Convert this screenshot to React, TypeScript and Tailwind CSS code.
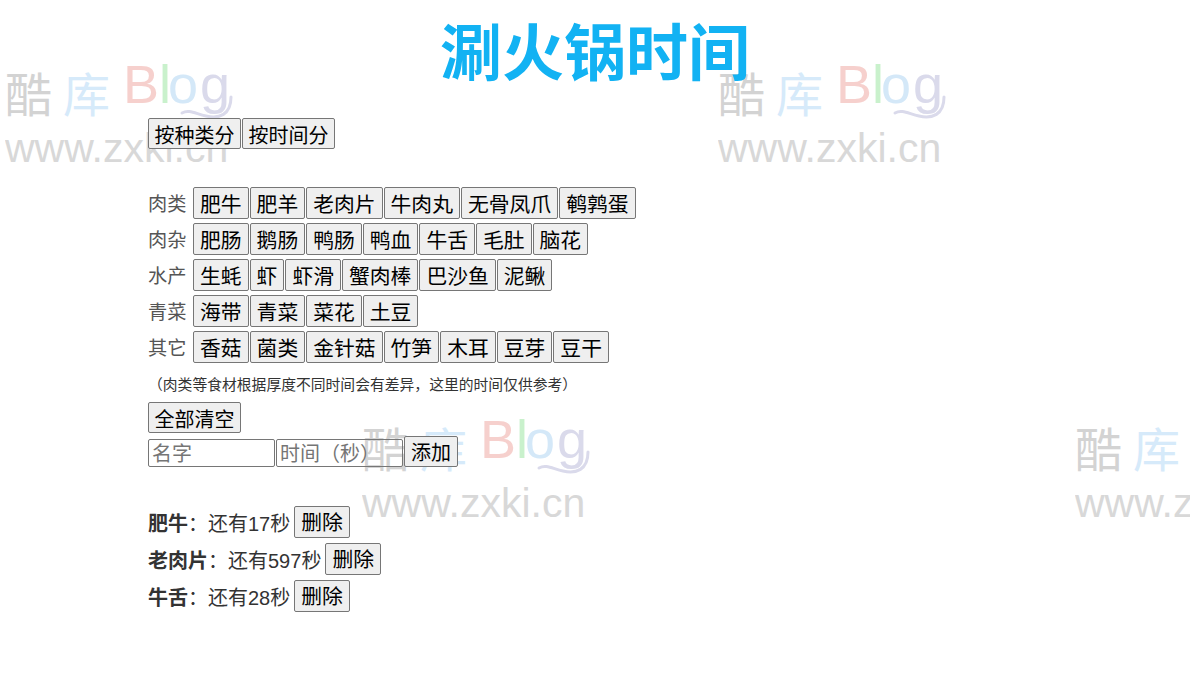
const categories = [
  { label: "肉类", items: ["肥牛", "肥羊", "老肉片", "牛肉丸", "无骨凤爪", "鹌鹑蛋"] },
  { label: "肉杂", items: ["肥肠", "鹅肠", "鸭肠", "鸭血", "牛舌", "毛肚", "脑花"] },
  { label: "水产", items: ["生蚝", "虾", "虾滑", "蟹肉棒", "巴沙鱼", "泥鳅"] },
  { label: "青菜", items: ["海带", "青菜", "菜花", "土豆"] },
  { label: "其它", items: ["香菇", "菌类", "金针菇", "竹笋", "木耳", "豆芽", "豆干"] },
];

const timers = [
  { name: "肥牛", left: 17 },
  { name: "老肉片", left: 597 },
  { name: "牛舌", left: 28 },
];

const btn =
  "shrink-0 border border-[#767676] bg-[#efefef] rounded-[2px] pt-[4px] leading-none text-black whitespace-nowrap";

// faint site watermark, drawn as a logo
const Watermark = ({ className }: { className: string }) => (
  <svg
    className={`pointer-events-none absolute ${className}`}
    width="240"
    height="112"
    viewBox="0 0 240 112"
  >
    <text x="0" y="49" fontSize="47" fill="#d3d3d3" fontFamily="Noto Sans CJK SC, sans-serif">
      酷
    </text>
    <text x="58" y="49" fontSize="47" fill="#d6eafa" fontFamily="Noto Sans CJK SC, sans-serif">
      库
    </text>
    <g fontSize="54" fontFamily="Liberation Sans, sans-serif">
      <text x="118" y="40" fill="#f6d0cd">B</text>
      <text x="154" y="40" fill="#c9f1cc">l</text>
      <text x="163" y="40" fill="#d4e8f8">o</text>
      <text x="195" y="40" fill="#dadaeb">g</text>
    </g>
    <path
      d="M226 34 C226 52 214 56 201 53 C191 51 184 46 177 50"
      fill="none"
      stroke="#dadaeb"
      strokeWidth="3"
      strokeLinecap="round"
    />
    <text x="0" y="99" fontSize="41" fill="#d8d8d8" fontFamily="Liberation Sans, sans-serif">
      www.zxki.cn
    </text>
  </svg>
);

export default function App() {
  return (
    <div className="relative min-h-screen w-full overflow-hidden bg-white font-[Liberation_Sans,Noto_Sans_CJK_SC,sans-serif]">
      <Watermark className="left-[5px] top-[63px]" />
      <Watermark className="left-[718px] top-[63px]" />
      <Watermark className="left-[362px] top-[418px]" />
      <Watermark className="left-[1075px] top-[418px]" />

      <div className="relative">
        <h1 className="pt-[24px] text-center text-[62px] font-bold leading-[62px] text-[#12b2f3]">
          涮火锅时间
        </h1>

        <div className="pl-[148px]">
          <div className="mt-[32px] flex gap-px">
            <button className={`${btn} h-[31px] px-[5.5px] text-[20px]`}>按种类分</button>
            <button className={`${btn} h-[31px] px-[5.5px] text-[20px]`}>按时间分</button>
          </div>

          <div className="mt-[38px] flex flex-col gap-[4px]">
            {categories.map((c) => (
              <div key={c.label} className="flex h-[32px] items-center">
                <span className="w-[45px] shrink-0 pt-[5px] text-[19.2px] text-[#555]">{c.label}</span>
                <div className="flex gap-px">
                  {c.items.map((it) => (
                    <button key={it} className={`${btn} h-[32px] px-[6px] text-[20.8px]`}>
                      {it}
                    </button>
                  ))}
                </div>
              </div>
            ))}
          </div>

          <p className="mt-[12px] text-[14.8px] leading-[20px] text-[#333]">
            （肉类等食材根据厚度不同时间会有差异，这里的时间仅供参考）
          </p>

          <button className={`${btn} mt-[7px] h-[31px] px-[5.5px] text-[20px]`}>全部清空</button>

          <div className="mt-[2px] flex items-end gap-px">
            <input
              placeholder="名字"
              className="h-[28px] w-[127px] rounded-[2px] border border-[#767676] bg-transparent px-[3px] pt-[3px] text-[20px] outline-none placeholder:text-[#757575]"
            />
            <input
              placeholder="时间（秒）"
              className="h-[28px] w-[127px] rounded-[2px] border border-[#767676] bg-transparent px-[3px] pt-[3px] text-[20px] outline-none placeholder:text-[#757575]"
            />
            <button className={`${btn} h-[31px] px-[6px] text-[20px]`}>添加</button>
          </div>

          <div className="mt-[39px] flex flex-col gap-[5px] text-[20px] text-[#333]">
            {timers.map((t) => (
              <div key={t.name} className="flex h-[32px] items-center">
                <span className="pt-[5px]">
                  <b className="font-bold">{t.name}</b>：还有{t.left}秒
                </span>
                <button className={`${btn} ml-[4px] h-[32px] px-[6px] text-[20.8px]`}>删除</button>
              </div>
            ))}
          </div>
        </div>
      </div>
    </div>
  );
}
